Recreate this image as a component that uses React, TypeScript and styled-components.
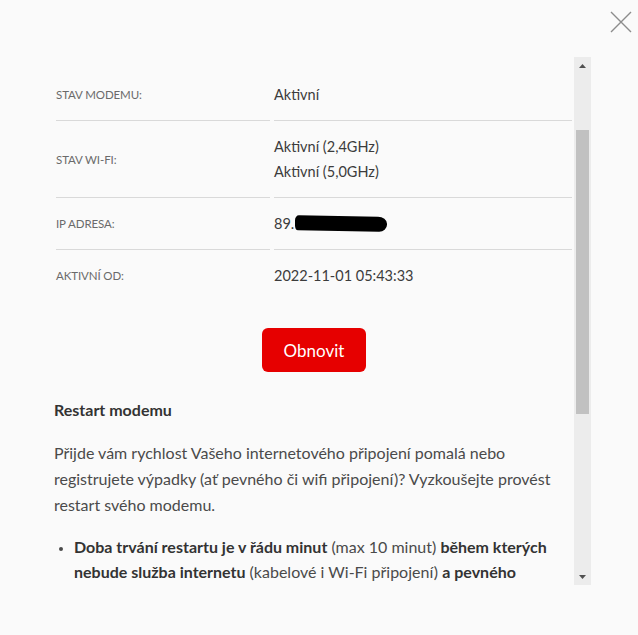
import React from "react";
import styled, { createGlobalStyle } from "styled-components";

const GlobalStyle = createGlobalStyle`
  html, body {
    margin: 0;
    padding: 0;
    background: #fafafa;
  }
  body {
    font-family: Lato, "Open Sans", "Liberation Sans", sans-serif;
    color: #333;
  }
  * { box-sizing: border-box; }
`;

const Page = styled.div`
  position: relative;
  width: 638px;
  height: 635px;
  padding: 57px 0 0 40px;
  background: #fafafa;
`;

const CloseButton = styled.button`
  position: absolute;
  top: 10px;
  right: 5px;
  width: 24px;
  height: 24px;
  padding: 0;
  border: none;
  background: transparent;
  display: flex;
  align-items: center;
  justify-content: center;
  cursor: pointer;
`;

const Frame = styled.div`
  display: flex;
  width: 551px;
  height: 528px;
`;

const Viewport = styled.div`
  flex: 1;
  overflow: hidden;
  padding: 12px 0 0 14px;
`;

const Scrollbar = styled.div`
  width: 17px;
  background: #ececec;
  display: flex;
  flex-direction: column;
`;

const ArrowButton = styled.div`
  height: 17px;
  display: flex;
  align-items: center;
  justify-content: center;
`;

const Track = styled.div`
  flex: 1;
  padding: 0 2px;
`;

const Thumb = styled.div`
  margin-top: 56px;
  height: 284px;
  background: #c1c1c1;
`;

const Row = styled.div`
  display: grid;
  grid-template-columns: 214px 1fr;
  column-gap: 4px;
  margin: 0 2px;
`;

const Cell = styled.div<{ $last?: boolean }>`
  padding: 13px 0;
  border-bottom: 1px solid ${(p) => (p.$last ? "transparent" : "#d9d9d9")};
  display: flex;
  flex-direction: column;
  justify-content: center;
`;

const Label = styled.span`
  font-size: 11.5px;
  text-transform: uppercase;
  color: #6a6a6a;
  letter-spacing: -0.1px;
`;

const Value = styled.span`
  font-size: 14.5px;
  line-height: 25px;
  color: #3c3c3c;
  display: flex;
  align-items: center;
`;

const Redaction = styled.span`
  display: inline-block;
  width: 92px;
  height: 15px;
  margin-left: 1px;
  background: #000;
  border-radius: 4px 9px 8px 3px / 5px 7px 7px 5px;
  transform: translateY(0px) skewY(1deg);
`;

const ButtonRow = styled.div`
  display: flex;
  justify-content: center;
  margin-top: 26px;
`;

const PrimaryButton = styled.button`
  width: 104px;
  height: 44px;
  border: none;
  border-radius: 6px;
  background: #e60000;
  color: #fff;
  font-family: Lato, "Open Sans", sans-serif;
  font-size: 17px;
  cursor: pointer;
`;

const Heading = styled.h3`
  margin: 26px 0 0;
  font-size: 16px;
  line-height: 24px;
  font-weight: 700;
  color: #333;
`;

const Paragraph = styled.p`
  margin: 18px 0 0;
  font-size: 16px;
  line-height: 26px;
  color: #4a4a4a;
  padding-right: 6px;
`;

const List = styled.ul`
  margin: 16px 0 0;
  padding: 0 20px 0 20px;
  font-size: 16px;
  line-height: 25px;
  color: #4a4a4a;
  li::marker { font-size: 13px; }
`;

const Strong = styled.strong`
  font-weight: 700;
  color: #333;
`;

const rows = [
  { label: "Stav modemu:", values: ["Aktivní"] },
  { label: "Stav Wi-Fi:", values: ["Aktivní (2,4GHz)", "Aktivní (5,0GHz)"] },
  { label: "IP adresa:", values: ["89."], redacted: true },
  { label: "Aktivní od:", values: ["2022-11-01 05:43:33"] },
];

export default function App() {
  return (
    <>
      <GlobalStyle />
      <Page>
        <CloseButton aria-label="Zavřít">
          <svg width="24" height="24" viewBox="0 0 24 24">
            <path d="M2 2 L22 22 M22 2 L2 22" stroke="#8c8c8c" strokeWidth="1.4" fill="none" />
          </svg>
        </CloseButton>
        <Frame>
          <Viewport>
            {rows.map((r, i) => {
              const last = i === rows.length - 1;
              return (
                <Row key={r.label}>
                  <Cell $last={last}>
                    <Label>{r.label}</Label>
                  </Cell>
                  <Cell $last={last}>
                    {r.values.map((v) => (
                      <Value key={v}>
                        {v}
                        {r.redacted && <Redaction />}
                      </Value>
                    ))}
                  </Cell>
                </Row>
              );
            })}
            <ButtonRow>
              <PrimaryButton>Obnovit</PrimaryButton>
            </ButtonRow>
            <Heading>Restart modemu</Heading>
            <Paragraph>
              Přijde vám rychlost Vašeho internetového připojení pomalá nebo registrujete výpadky (ať pevného
              či wifi připojení)? Vyzkoušejte provést restart svého modemu.
            </Paragraph>
            <List>
              <li>
                <Strong>Doba trvání restartu je v řádu minut</Strong> (max 10 minut){" "}
                <Strong>během kterých nebude služba internetu</Strong> (kabelové i Wi-Fi připojení){" "}
                <Strong>a pevného hlasu dostupná.</Strong>
              </li>
            </List>
          </Viewport>
          <Scrollbar>
            <ArrowButton>
              <svg width="7" height="4" viewBox="0 0 7 4">
                <path d="M0 4 L3.5 0 L7 4 Z" fill="#505050" />
              </svg>
            </ArrowButton>
            <Track>
              <Thumb />
            </Track>
            <ArrowButton>
              <svg width="7" height="4" viewBox="0 0 7 4">
                <path d="M0 0 L7 0 L3.5 4 Z" fill="#505050" />
              </svg>
            </ArrowButton>
          </Scrollbar>
        </Frame>
      </Page>
    </>
  );
}
